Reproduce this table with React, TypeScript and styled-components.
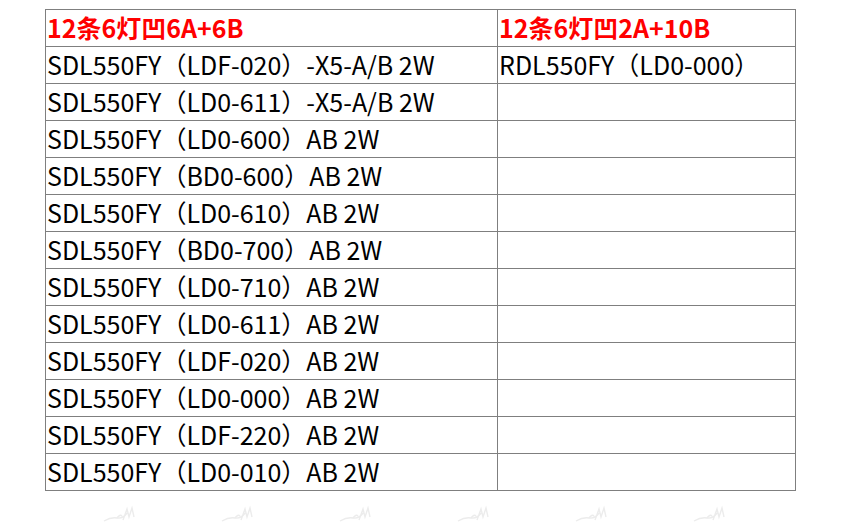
import React from 'react';
import styled, { createGlobalStyle } from 'styled-components';

const GlobalStyle = createGlobalStyle`
  html, body {
    margin: 0;
    padding: 0;
    background: #fff;
  }
  body {
    font-family: "Noto Sans CJK SC", "Noto Sans", sans-serif;
  }
`;

const Page = styled.div`
  width: 843px;
  height: 523px;
  padding: 9px 0 0 45px;
  box-sizing: border-box;
  overflow: hidden;
`;

const Table = styled.table`
  border-collapse: collapse;
  table-layout: fixed;
  width: 750px;
`;

const Cell = styled.td<{ $head?: boolean; $w?: number }>`
  border: 1px solid #7f7f7f;
  height: 37px;
  padding: 0 0 2px 1px;
  box-sizing: border-box;
  white-space: nowrap;
  overflow: hidden;
  vertical-align: middle;
  font-size: 25px;
  font-weight: ${(p) => (p.$head ? 700 : 400)};
  color: ${(p) => (p.$head ? '#ff0000' : '#000')};
  width: ${(p) => (p.$w ? `${p.$w}px` : 'auto')};
  line-height: 1;
`;

// faint watermark strip under the table
const Watermark = styled.div`
  display: flex;
  gap: 80px;
  margin: 14px 0 0 58px;
`;

const Mark = () => (
  <svg width="38" height="18" viewBox="0 0 38 18">
    <path
      d="M1 16 Q8 12 14 13 T24 8 M20 15 L24 4 L26 12 L29 3 L31 12 M14 13 Q17 9 19 11"
      fill="none"
      stroke="#ececec"
      strokeWidth="1.4"
    />
  </svg>
);

const left = [
  'SDL550FY（LDF-020）-X5-A/B 2W',
  'SDL550FY（LD0-611）-X5-A/B 2W',
  'SDL550FY（LD0-600）AB 2W',
  'SDL550FY（BD0-600）AB 2W',
  'SDL550FY（LD0-610）AB 2W',
  'SDL550FY（BD0-700）AB 2W',
  'SDL550FY（LD0-710）AB 2W',
  'SDL550FY（LD0-611）AB 2W',
  'SDL550FY（LDF-020）AB 2W',
  'SDL550FY（LD0-000）AB 2W',
  'SDL550FY（LDF-220）AB 2W',
  'SDL550FY（LD0-010）AB 2W',
];

const right = ['RDL550FY（LD0-000）'];

export default function App() {
  return (
    <>
      <GlobalStyle />
      <Page>
        <Table>
          <tbody>
            <tr>
              <Cell $head $w={452}>12条6灯凹6A+6B</Cell>
              <Cell $head $w={298}>12条6灯凹2A+10B</Cell>
            </tr>
            {left.map((text, i) => (
              <tr key={i}>
                <Cell>{text}</Cell>
                <Cell>{right[i] ?? ''}</Cell>
              </tr>
            ))}
          </tbody>
        </Table>
        <Watermark>
          {Array.from({ length: 6 }).map((_, i) => (
            <Mark key={i} />
          ))}
        </Watermark>
      </Page>
    </>
  );
}
